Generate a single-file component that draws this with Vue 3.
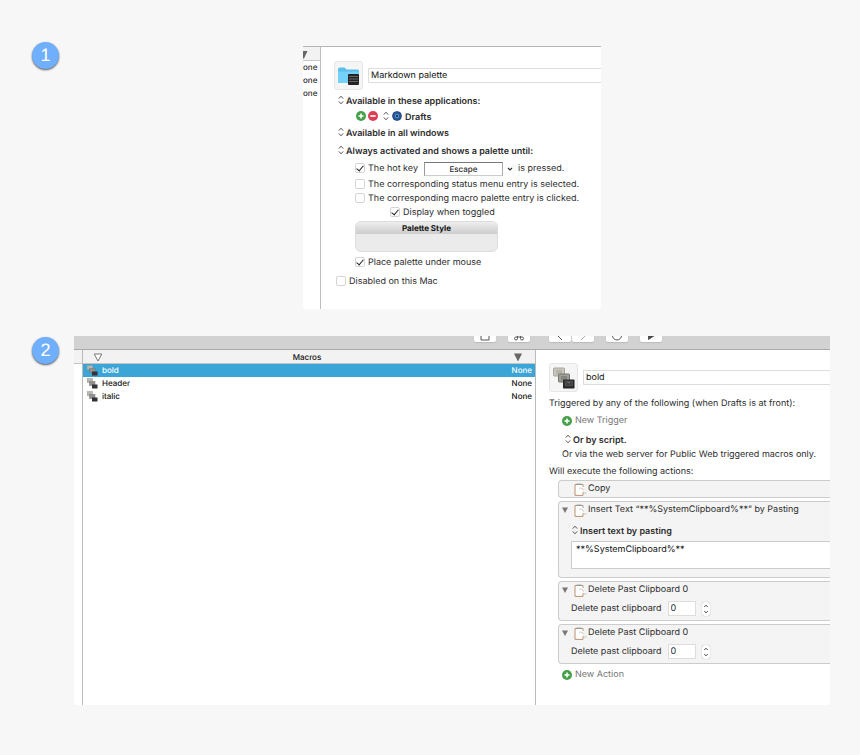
<script setup>
import { ref, reactive } from 'vue'

const paletteName = ref('Markdown palette')
const hotKey = ref('Escape')
const checks = reactive({ hotkey: true, status: false, macro: false, toggled: true, under: true, disabled: false })

const macros = ['bold', 'Header', 'italic']
const selected = ref('bold')
const macroName = ref('bold')
const inserted = ref('**%SystemClipboard%**')
const deletions = reactive([{ id: 1, value: '0' }, { id: 2, value: '0' }])
</script>

<template>
  <main class="page">
    <section class="step">
      <span class="badge">1</span>
      <div class="window palette-window">
        <div class="trigger-strip">
          <div class="strip-head"><svg width="6" height="8" viewBox="0 0 6 8"><path d="M0 0H4.500L1 7.500H0Z" fill="#666" /></svg></div>
          <div v-for="n in 3" :key="n" class="strip-row">one</div>
        </div>
        <form class="detail palette-detail" @submit.prevent>
          <div class="title-row">
            <span class="icon-well">
              <svg width="22" height="20" viewBox="0 0 22 20">
                <path d="M0 3.500Q0 1.500 1.500 1.500H6.500L8.500 3.500H19.500Q21 3.500 21 5V16Q21 17 20 17H1Q0 17 0 16Z" fill="#5bbfe9" />
                <path d="M0 5.500H21V16Q21 17 20 17H1Q0 17 0 16Z" fill="#73d1fa" />
                <rect x="10" y="8" width="11" height="11" rx="1" fill="#242424" />
                <path d="M11 10.500H20M11 13H20M11 15.500H20" stroke="#777" stroke-width=".8" />
              </svg>
            </span>
            <input v-model="paletteName" class="title-input" type="text" aria-label="Group name" />
          </div>
          <div class="row">
            <svg class="updown" viewBox="0 0 6 10"><path d="M.8 3.600L3 1.200 5.200 3.600M.8 6.400L3 8.800 5.200 6.400" /></svg>
            <select class="popup" aria-label="Applications"><option>Available in these applications:</option></select>
          </div>
          <div class="row app-row">
            <button class="round" type="button" aria-label="Add application"><svg viewBox="0 0 10 10"><circle cx="5" cy="5" r="5" fill="#46a049" /><path d="M5 2.500V7.500M2.500 5H7.500" stroke="#fff" stroke-width="1.500" /></svg></button>
            <button class="round" type="button" aria-label="Remove application"><svg viewBox="0 0 10 10"><circle cx="5" cy="5" r="5" fill="#dc3f55" /><path d="M2.400 5H7.600" stroke="#fff" stroke-width="1.700" /></svg></button>
            <svg class="updown app-arrows" viewBox="0 0 6 10"><path d="M.8 3.600L3 1.200 5.200 3.600M.8 6.400L3 8.800 5.200 6.400" /></svg>
            <svg class="drafts" viewBox="0 0 10 10"><circle cx="5" cy="5" r="4.800" fill="#173b70" /><circle cx="5" cy="5" r="3.900" fill="#285b99" /><rect x="3.500" y="3.500" width="3" height="3" rx=".8" fill="#173b70" stroke="#8fc3ee" stroke-width=".7" /></svg>
            <select class="popup" aria-label="Application"><option>Drafts</option></select>
          </div>
          <div class="row">
            <svg class="updown" viewBox="0 0 6 10"><path d="M.8 3.600L3 1.200 5.200 3.600M.8 6.400L3 8.800 5.200 6.400" /></svg>
            <select class="popup" aria-label="Windows"><option>Available in all windows</option></select>
          </div>
          <div class="row activation">
            <svg class="updown" viewBox="0 0 6 10"><path d="M.8 3.600L3 1.200 5.200 3.600M.8 6.400L3 8.800 5.200 6.400" /></svg>
            <select class="popup" aria-label="Activation"><option>Always activated and shows a palette until:</option></select>
          </div>
          <div class="options">
            <div class="hotkey-row">
              <label class="check"><input v-model="checks.hotkey" type="checkbox" />The hot key</label>
              <input v-model="hotKey" class="hotkey" type="text" aria-label="Hot key" />
              <button class="hotkey-menu" type="button" aria-label="Hot key options"><svg width="6" height="6" viewBox="0 0 6 6"><path d="M1 2L3 4 5 2" fill="none" stroke="#333" stroke-width="1.200" /></svg></button>
              <select class="condition" aria-label="Hot key condition"><option>is pressed.</option></select>
            </div>
            <label class="check"><input v-model="checks.status" type="checkbox" />The corresponding status menu entry is selected.</label>
            <label class="check"><input v-model="checks.macro" type="checkbox" />The corresponding macro palette entry is clicked.</label>
            <label class="check nested"><input v-model="checks.toggled" type="checkbox" />Display when toggled</label>
            <button class="palette-style" type="button"><span>Palette Style</span></button>
            <label class="check"><input v-model="checks.under" type="checkbox" />Place palette under mouse</label>
          </div>
          <label class="check disabled-check"><input v-model="checks.disabled" type="checkbox" />Disabled on this Mac</label>
        </form>
      </div>
    </section>

    <section class="step">
      <span class="badge">2</span>
      <div class="window">
        <div class="toolbar">
          <button type="button" aria-label="Share"><svg viewBox="0 0 14 14"><path d="M5 4H3V13H11V4H9M7 9V1M5 3L7 1 9 3" /></svg></button>
          <button type="button" aria-label="Commands"><svg viewBox="0 0 14 14"><path d="M5.500 7V5.500A1.500 1.500 0 1 0 4 7H10A1.500 1.500 0 1 0 8.500 5.500V11.500A1.500 1.500 0 1 0 10 10H4A1.500 1.500 0 1 0 5.500 11.500Z" /></svg></button>
          <span class="history">
            <button type="button" aria-label="Back"><svg viewBox="0 0 14 14"><path d="M9 3L4 8 9 13" /></svg></button>
            <button type="button" aria-label="Forward"><svg class="faint" viewBox="0 0 14 14"><path d="M5 3L10 8 5 13" /></svg></button>
          </span>
          <button type="button" aria-label="Record"><svg viewBox="0 0 14 14"><circle cx="7" cy="8.500" r="4.500" /></svg></button>
          <button type="button" aria-label="Run"><svg viewBox="0 0 14 14"><path d="M4.500 5V12.500L10.500 8.500Z" fill="#444" /></svg></button>
        </div>
        <div class="editor">
          <div class="gutter"></div>
          <div class="macro-list">
            <table>
              <colgroup><col class="mark-col" /><col /><col class="trigger-col" /></colgroup>
              <thead>
                <tr>
                  <th><svg width="10" height="9" viewBox="0 0 10 9"><path d="M1.200 1H8.800L5 8Z" fill="#fff" stroke="#777" /></svg></th>
                  <th>Macros</th>
                  <th><svg width="10" height="9" viewBox="0 0 10 9"><path d="M1 .5H9L5 8.500Z" fill="#666" /></svg></th>
                </tr>
              </thead>
              <tbody>
                <tr v-for="macro in macros" :key="macro" :class="{ selected: macro === selected }" @click="selected = macro">
                  <td colspan="2">
                    <span class="macro-name">
                      <svg width="11" height="11" viewBox="0 0 22 22"><rect x="0" y="1" width="11" height="8" fill="#b8b8b0" stroke="#999" /><rect x="5" y="7" width="11" height="8" fill="#92928c" stroke="#777" /><rect x="10" y="13" width="11" height="8" fill="#333" /></svg>{{ macro }}
                    </span>
                  </td>
                  <td class="trigger">None</td>
                </tr>
              </tbody>
            </table>
          </div>
          <form class="detail macro-detail" @submit.prevent>
            <div class="title-row">
              <span class="icon-well">
                <svg width="22" height="22" viewBox="0 0 22 22">
                  <rect x="0.500" y="1" width="11" height="8" rx=".8" fill="#c6c6bd" stroke="#a7a79f" /><rect x="3" y="3" width="6" height="4" fill="#b3b3aa" />
                  <rect x="5.500" y="7" width="11" height="8" rx=".8" fill="#a0a098" stroke="#74746d" /><rect x="8" y="9" width="6" height="4" fill="#858580" />
                  <rect x="10" y="12.500" width="11.500" height="9" rx=".8" fill="#262626" /><rect x="12" y="14" width="7.500" height="5" fill="#444" stroke="#666" stroke-width=".5" /><path d="M14.500 15.500H17" stroke="#888" stroke-width=".6" />
                </svg>
              </span>
              <input v-model="macroName" class="title-input" type="text" aria-label="Macro name" />
            </div>
            <p class="line first-line">Triggered by any of the following (when Drafts is at front):</p>
            <button class="add" type="button"><svg viewBox="0 0 10 10"><circle cx="5" cy="5" r="5" fill="#46a049" /><path d="M5 2.500V7.500M2.500 5H7.500" stroke="#fff" stroke-width="1.500" /></svg>New Trigger</button>
            <div class="row script-row">
              <svg class="updown" viewBox="0 0 6 10"><path d="M.8 3.600L3 1.200 5.200 3.600M.8 6.400L3 8.800 5.200 6.400" /></svg>
              <select class="popup" aria-label="Script trigger"><option>Or by script.</option></select>
            </div>
            <p class="line web-line">Or via the web server for Public Web triggered macros only.</p>
            <p class="line">Will execute the following actions:</p>
            <div class="actions">
              <article class="action">
                <header>
                  <span class="twist"></span>
                  <svg class="clip" viewBox="0 0 13 13"><path d="M9 4V1.500H1V12.400H9V9" fill="#fff" /><path d="M9 4V1.500H1V12.400H9V9" fill="none" stroke="#b99270" /><path d="M2.500 1.300H7.500" stroke="#999" stroke-width="1.400" /><path d="M5 5.500Q8.500 4 9.500 7.500M10 10H12.500" fill="none" stroke="#bbb" stroke-width=".8" /></svg>
                  Copy
                </header>
              </article>
              <article class="action">
                <header>
                  <button class="twist" type="button" aria-label="Collapse"><svg viewBox="0 0 6 6"><path d="M0 .5H6L3 6Z" /></svg></button>
                  <svg class="clip" viewBox="0 0 13 13"><path d="M9 4V1.500H1V12.400H9V9" fill="#fff" /><path d="M9 4V1.500H1V12.400H9V9" fill="none" stroke="#b99270" /><path d="M2.500 1.300H7.500" stroke="#999" stroke-width="1.400" /><path d="M5 5.500Q8.500 4 9.500 7.500M10 10H12.500" fill="none" stroke="#bbb" stroke-width=".8" /></svg>
                  Insert Text “**%SystemClipboard%**” by Pasting
                </header>
                <div class="row insert-row">
                  <svg class="updown" viewBox="0 0 6 10"><path d="M.8 3.600L3 1.200 5.200 3.600M.8 6.400L3 8.800 5.200 6.400" /></svg>
                  <select class="popup" aria-label="Insert mode"><option>Insert text by pasting</option></select>
                </div>
                <textarea v-model="inserted" aria-label="Text to insert"></textarea>
              </article>
              <article v-for="item in deletions" :key="item.id" class="action">
                <header>
                  <button class="twist" type="button" aria-label="Collapse"><svg viewBox="0 0 6 6"><path d="M0 .5H6L3 6Z" /></svg></button>
                  <svg class="clip" viewBox="0 0 13 13"><path d="M9 4V1.500H1V12.400H9V9" fill="#fff" /><path d="M9 4V1.500H1V12.400H9V9" fill="none" stroke="#b99270" /><path d="M2.500 1.300H7.500" stroke="#999" stroke-width="1.400" /><path d="M5 5.500Q8.500 4 9.500 7.500M10 10H12.500" fill="none" stroke="#bbb" stroke-width=".8" /></svg>
                  Delete Past Clipboard 0
                </header>
                <div class="delete-row">
                  <label :for="'past-' + item.id">Delete past clipboard</label>
                  <input :id="'past-' + item.id" v-model="item.value" type="text" />
                  <button class="stepper" type="button" aria-label="Change number"><svg viewBox="0 0 8 14"><path d="M2.200 5L4 3.200 5.800 5M2.200 9L4 10.800 5.800 9" /></svg></button>
                </div>
              </article>
            </div>
            <button class="add" type="button"><svg viewBox="0 0 10 10"><circle cx="5" cy="5" r="5" fill="#46a049" /><path d="M5 2.500V7.500M2.500 5H7.500" stroke="#fff" stroke-width="1.500" /></svg>New Action</button>
          </form>
        </div>
      </div>
    </section>
  </main>
</template>

<style>
body { margin: 0; background: #f7f7f7; }
</style>

<style scoped>
* { box-sizing: border-box; }
.page { padding: 46px 30px 50px 32px; display: grid; gap: 27px; font: 9px/16px Inter, "Liberation Sans", sans-serif; color: #2c2c2c; text-rendering: geometricPrecision; }
.step { display: grid; grid-template-columns: 28px minmax(0, 1fr); column-gap: 14px; align-items: start; }
.badge { width: 27px; height: 27px; margin-top: -4px; border-radius: 50%; background: #70affb; color: #fff; font: 18px/27px "Liberation Sans", sans-serif; text-align: center; box-shadow: 0 1px 2px #555; }
.step + .step .badge { margin-top: 1px; }
button, input, select, textarea { font: inherit; color: inherit; text-rendering: inherit; margin: 0; padding: 0; border: 0; border-radius: 0; background: none; appearance: none; outline: 0; }
button { cursor: pointer; }
svg { display: block; flex: none; }
.window { background: #fff; overflow: hidden; }
.palette-window { display: grid; grid-template-columns: 18px minmax(0, 1fr); width: 100%; max-width: 298px; justify-self: center; border-top: 1px solid #b5b5b5; }
.trigger-strip { border-right: 1px solid #bdbdbd; }
.strip-head { height: 14px; padding-top: 4px; background: #f2f2f2; border-bottom: 1px solid #c9c9c9; }
.strip-row { font-size: 8px; line-height: 13px; font-weight: 500; }
.detail { min-width: 0; white-space: nowrap; overflow: hidden; }
.palette-detail { padding: 14px 0 20px 13px; }
.title-row { display: flex; align-items: center; gap: 5px; }
.icon-well { display: grid; place-items: center; flex: none; width: 29px; height: 29px; background: #f5f5f5; border: 1px solid #e6e6e6; border-radius: 3px; }
.title-input { flex: 1; min-width: 0; height: 15px; padding: 1px 0 0 2px; border: 1px solid #ddd; border-right: 0; color: #111; }
.row { display: flex; align-items: center; height: 16px; gap: 2px; padding-left: 4px; }
.title-row + .row { margin-top: 2px; }
.updown { width: 6px; height: 10px; fill: none; stroke: #555; stroke-width: 1; }
.popup { font-weight: 600; height: 16px; padding-top: 2px; }
.app-row { padding-left: 22px; }
.round { width: 10px; height: 10px; }
.app-arrows { margin: 0 1px 0 3px; }
.drafts { width: 10px; height: 10px; margin-right: 1px; }
.activation { margin-top: 2px; }
.options { padding: 2px 0 0 21px; }
.check { display: flex; align-items: center; gap: 3px; height: 14px; }
.check input { flex: none; display: grid; place-items: center; width: 10px; height: 10px; margin-bottom: 2px; border: 1px solid #d5d5d5; border-radius: 2px; background: #fff; }
.check input:checked::before { content: ""; width: 3px; height: 6px; margin-bottom: 2px; border: solid #222; border-width: 0 1px 1px 0; transform: rotate(40deg); }
.hotkey-row { display: flex; align-items: center; height: 18px; }
.hotkey { flex: none; width: 79px; height: 14px; margin-left: 6px; border: 1px solid #999; border-color: #777 #aaa #ccc #999; text-align: center; font-size: 8px; font-weight: 500; }
.hotkey-menu { margin: 0 5px 0 4px; }
.condition { height: 16px; }
.nested { margin-left: 35px; }
.palette-style { display: block; width: 143px; height: 31px; margin: 1px 0 4px; border-radius: 6px; overflow: hidden; background: #ebebeb; border: 1px solid #ddd; }
.palette-style span { display: block; height: 12px; margin-bottom: 17px; background: linear-gradient(#eee, #ccc); font-size: 8px; line-height: 12px; font-weight: 700; color: #111; }
.disabled-check { margin: 5px 0 0 2px; }

.toolbar { display: flex; justify-content: flex-end; align-items: flex-end; height: 14px; padding: 0 168px 7px 0; background: #d2d2d2; border-bottom: 1px solid #aaa; gap: 12px; }
.toolbar button { flex: none; display: grid; place-items: center; width: 22px; height: 18px; padding-top: 2px; border-radius: 2px; background: #fff; box-shadow: 0 1px 1px #bbb; }
.toolbar svg { width: 14px; height: 14px; fill: none; stroke: #555; }
.toolbar .faint { stroke: #aaa; }
.history { display: flex; gap: 1px; margin-left: 7px; }
.editor { display: grid; grid-template-columns: 9px minmax(0, 453fr) minmax(0, 294fr); }
.gutter { border-right: 1px solid #bbb; background: linear-gradient(#f2f2f2 13px, #c4c4c4 13px 14px, #fff 14px); }
.macro-list { border-right: 1px solid #bbb; }
table { width: 100%; table-layout: fixed; border-collapse: collapse; font-size: 8px; line-height: 13px; font-weight: 500; color: #111; }
.mark-col { width: 30px; }
.trigger-col { width: 34px; }
th { height: 13px; padding: 1px 0 0; line-height: 12px; font-weight: 500; text-align: center; background: #f2f2f2; border-bottom: 1px solid #c4c4c4; }
th svg { margin: 0 auto; }
td { height: 13px; padding: 0; }
.macro-name { display: flex; align-items: center; gap: 4px; padding-left: 4px; }
.trigger { text-align: right; padding-right: 3px; }
.selected { background: #3aa5d6; color: #fff; }
.macro-detail { padding: 13px 0 22px 13px; }
.line { margin: 0; }
.first-line { margin-top: 4px; }
.add { display: flex; align-items: center; gap: 3px; height: 16px; margin-left: 13px; color: #777; }
.line + .add { margin-top: 1px; }
.add svg { width: 10px; height: 10px; margin-bottom: 1px; }
.script-row { margin-top: 2px; padding-left: 16px; }
.web-line { padding-left: 13px; }
.web-line + .line { margin-top: 1px; }
.actions { display: grid; gap: 3px; margin: 0 0 3px 9px; }
.action { background: #f4f4f4; border: 1px solid #ccc; border-right: 0; border-radius: 4px 0 0 4px; padding-left: 3px; }
.action header { display: flex; align-items: center; height: 16px; }
.twist { width: 6px; height: 6px; margin-right: 6px; flex: none; }
.twist svg { width: 6px; height: 6px; fill: #777; }
.clip { width: 13px; height: 13px; margin-right: 1px; }
.insert-row { margin-top: 4px; padding-left: 10px; }
textarea { display: block; width: calc(100% - 9px); height: 28px; margin: 3px 0 8px 9px; padding: 1px 4px 0; border: 1px solid #ccc; border-right: 0; background: #fff; color: #111; line-height: 14px; resize: none; overflow: hidden; }
.delete-row { display: flex; align-items: center; height: 22px; padding: 0 0 1px 9px; }
.delete-row input { width: 28px; height: 15px; margin: 0 6px; padding: 1px 0 0 2px; border: 1px solid #ddd; background: #fff; }
.stepper { width: 8px; height: 14px; border-radius: 3px; background: #fff; box-shadow: 0 0 1px #888; }
.stepper svg { fill: none; stroke: #444; }
</style>
